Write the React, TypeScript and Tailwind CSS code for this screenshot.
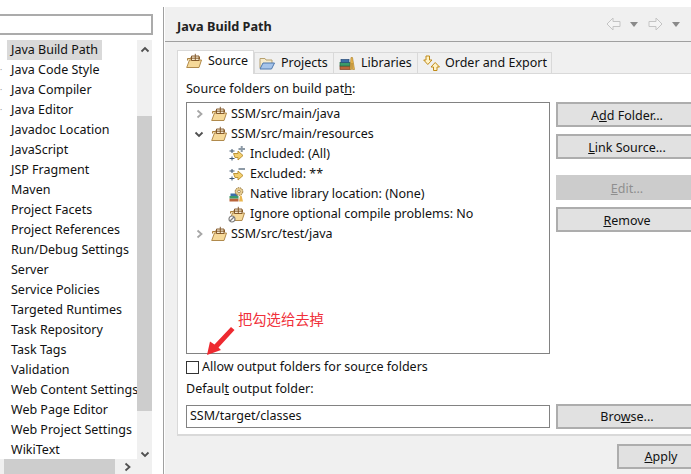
import React from "react";

const FONT = "font-['Noto_Sans','Open_Sans',sans-serif]";

const items = [
  "Java Build Path", "Java Code Style", "Java Compiler", "Java Editor", "Javadoc Location", "JavaScript",
  "JSP Fragment", "Maven", "Project Facets", "Project References", "Run/Debug Settings", "Server",
  "Service Policies", "Targeted Runtimes", "Task Repository", "Task Tags", "Validation",
  "Web Content Settings", "Web Page Editor", "Web Project Settings", "WikiText",
];

function Pkg({ className = "" }: { className?: string }) {
  return (
    <svg width="16" height="16" viewBox="0 0 16 16" className={className}>
      <path d="M1.500 7.500v-2h3l1-1.500h8v2" fill="#f3dca8" stroke="#a9803f" />
      <path d="M.7 14.500 3.500 7h12l-2.500 7.500z" fill="#f6d999" stroke="#b08a4c" />
      <path d="M5.500 3h7.500v4.500H5.500z" fill="#f7ecd2" stroke="#7a4f20" strokeWidth=".9" />
      <path d="M9.300 .8v7M4.500 5.200h9.500" stroke="#7a4f20" strokeWidth=".9" />
    </svg>
  );
}

function ProjectFolder() {
  return (
    <svg width="16" height="16" viewBox="0 0 16 16">
      <path d="M1 13V3.500h5l1 1.500h6v3" fill="#f6ebcd" stroke="#b7a16f" />
      <path d="M1 14h11.500L15.500 8H4z" fill="#a6c4ea" stroke="#4f78ad" />
    </svg>
  );
}

function Books() {
  return (
    <svg width="16" height="16" viewBox="0 0 16 16">
      <rect x="1" y="11" width="10" height="3.500" fill="#b9643a" stroke="#7d3f20" strokeWidth=".7" />
      <rect x="1" y="7.500" width="10" height="3.500" fill="#3c9a6a" stroke="#1f6b45" strokeWidth=".7" />
      <rect x="2" y="4.500" width="8" height="3" fill="#3b6ea8" stroke="#254a78" strokeWidth=".7" />
      <path d="M11 14.500 12 2.500h1.500l2 12h-2L13 8l-.5 6.500z" fill="#eab64f" stroke="#a87a20" strokeWidth=".6" />
    </svg>
  );
}

function OrderIcon() {
  return (
    <svg width="18" height="16" viewBox="0 0 18 16">
      <path d="M3 1h3.500v4H9L4.800 9.500 .7 5H3z" fill="#fff3c8" stroke="#c08a18" />
      <path d="M10.500 15.500V12H8l4.200-4.500L16.500 12H14v3.500z" fill="#fff3c8" stroke="#c08a18" />
    </svg>
  );
}

function Filter({ minus }: { minus?: boolean }) {
  return (
    <svg width="16" height="16" viewBox="0 0 16 16">
      <path d="M.5 5h5M.5 12.500h5M3 3v4M3 10.500v4" stroke="#3f566e" />
      <path d="M4.500 7.500H9V5L14 9.500 9 14v-2.500H6z" fill="#f3cf6e" stroke="#b58b2d" strokeWidth=".9" />
      <path d="M9.500 3h6.500" stroke="#8d9aa6" strokeWidth="2" />
      {!minus && <path d="M12.700 0v6" stroke="#8d9aa6" strokeWidth="2" />}
    </svg>
  );
}

function Native() {
  return (
    <svg width="16" height="16" viewBox="0 0 16 16">
      <rect x="0.500" y="12.500" width="9" height="3" fill="#b9643a" />
      <rect x="0.500" y="10" width="9" height="2.500" fill="#3c9a6a" />
      <rect x="1.500" y="7.500" width="7" height="2.500" fill="#3b6ea8" />
      <circle cx="10" cy="5.500" r="3.800" fill="#e9cf94" stroke="#8a6a30" strokeDasharray="1.500 .8" />
      <circle cx="10" cy="5.500" r="1.300" fill="#fff" stroke="#8a6a30" strokeWidth=".7" />
      <path d="M10 15.500l1-6h1.500l1.500 6z" fill="#eab64f" />
    </svg>
  );
}

function Ignore() {
  return (
    <div className="relative w-4 h-4">
      <Pkg />
      <svg width="8" height="8" viewBox="0 0 8 8" className="absolute left-[-1px] bottom-[-1px]">
        <circle cx="4" cy="4" r="3" fill="#fff" stroke="#7c7c7c" strokeWidth="1.200" />
        <path d="M2 6l4-4" stroke="#7c7c7c" strokeWidth="1.200" />
      </svg>
    </div>
  );
}

function Chevron({ dir, dark }: { dir: "right" | "down" | "up" | "left"; dark?: boolean }) {
  const d = { right: "M3.500 1.500 7.500 5l-4 3.500", left: "M6.500 1.500 2.500 5l4 3.500", down: "M1.500 3.500 5 7l3.500-3.500", up: "M1.500 6.500 5 3l3.500 3.500" }[dir];
  return (
    <svg width="10" height="10" viewBox="0 0 10 10">
      <path d={d} fill="none" stroke={dark ? "#505050" : "#a6a6a6"} strokeWidth="1.800" />
    </svg>
  );
}

function NavArrow({ flip }: { flip?: boolean }) {
  return (
    <svg width="15" height="14" viewBox="0 0 15 14" className={flip ? "-scale-x-100" : ""}>
      <path d="M7 1 1 7l6 6V9.500h7v-5H7z" fill="#f4f4f4" stroke="#c4c4c4" />
    </svg>
  );
}

function Caret() {
  return (
    <svg width="8" height="5" viewBox="0 0 8 5">
      <path d="M0 0h8L4 5z" fill="#8a8a8a" />
    </svg>
  );
}

function Tab({ icon, label, active, className }: { icon: React.ReactNode; label: string; active?: boolean; className: string }) {
  return (
    <div
      className={
        "flex items-center whitespace-nowrap border-l border-t border-[#d9d9d9] " +
        (active ? "h-[24px] bg-white border-r mb-[-1px] z-10 pb-[3px] " : "h-[21px] pb-[1px] bg-[#f0f0f0] ") +
        className
      }
    >
      {icon}
      <span>{label}</span>
    </div>
  );
}

function Btn({ children, disabled, low, className = "" }: { children: React.ReactNode; disabled?: boolean; low?: boolean; className?: string }) {
  return (
    <div
      className={
        "h-[25px] flex items-center justify-center border-2 " +
        (low ? "pt-[3px] " : "pt-[1px] ") +
        (disabled ? "bg-[#cccccc] border-[#cccccc] text-[#8f8f8f] " : "bg-[#e1e1e1] border-[#adadad] ") +
        className
      }
    >
      <span>{children}</span>
    </div>
  );
}

function Row({ icon, label, chevron, indent }: { icon: React.ReactNode; label: string; chevron?: React.ReactNode; indent?: boolean }) {
  return (
    <div className={"h-[20px] flex items-center " + (indent ? "pl-[42px]" : "pl-[7px]")}>
      {!indent && <div className="w-[17px] flex justify-start">{chevron}</div>}
      <div className={indent ? "w-[21px]" : "w-[20px]"}>{icon}</div>
      <span className="pb-[1px]">{label}</span>
    </div>
  );
}

export default function App() {
  return (
    <div className={"relative w-[691px] h-[474px] overflow-hidden bg-white flex text-[12.5px] leading-[20px] text-[#111] " + FONT}>
      {/* left preference tree */}
      <div className="w-[163px] shrink-0 flex flex-col">
        <div className="h-[21px] mt-[14px] mr-[10px] border-2 border-[#ababab] border-l-0 bg-white" />
        <div className="mt-[5px] w-[152px] flex">
          <div className="w-[137px] h-[419px] overflow-hidden relative">
            {items.map((t, i) => (
              <div key={t} className="h-[20px] flex items-center whitespace-nowrap">
                <span className="w-[7px] shrink-0 text-[8px] text-[#999]">{i > 0 && i < 4 ? "·" : ""}</span>
                <span className={"h-[20px] leading-[20px] pl-[4px] pr-[4px] " + (i === 0 ? "bg-[#d9d9d9]" : "")}>{t}</span>
              </div>
            ))}
          </div>
          <div className="w-[15px] h-[419px] bg-[#f0f0f0] flex flex-col items-center">
            <div className="h-[19px] flex items-center"><Chevron dir="up" dark /></div>
            <div className="mt-[57px] w-full h-[295px] bg-[#cdcdcd]" />
            <div className="mt-[37px] h-[11px] flex items-center"><Chevron dir="down" dark /></div>
          </div>
        </div>
        <div className="w-[152px] h-[15px] bg-[#f0f0f0] flex">
          <div className="ml-[4px] w-[111px] bg-[#cdcdcd]" />
          <div className="w-[22px] flex items-center justify-end pr-[5px]"><Chevron dir="right" dark /></div>
        </div>
      </div>

      <div className="w-px mt-[7px] bg-[#a0a0a0]" />
      <div className="w-px" />

      {/* right property page */}
      <div className="flex-1 min-w-0 mt-[7px] bg-[#f0f0f0] flex flex-col">
        <div className="h-[35px] shrink-0 border-b border-[#a0a0a0] flex items-center pl-[12px] pr-[11px] pt-[3px]">
          <span className="text-[12.7px] font-bold text-[#222]">Java Build Path</span>
          <div className="ml-auto flex items-center pb-[3px]">
            <NavArrow />
            <div className="ml-[9px]"><Caret /></div>
            <div className="ml-[10px]"><NavArrow flip /></div>
            <div className="ml-[9px]"><Caret /></div>
          </div>
        </div>

        <div className="ml-[12px] mt-[7px] w-[540px] shrink-0 flex flex-col">
          <div className="flex items-end h-[24px] relative">
            <Tab active className="w-[77px] pl-[8px]" icon={<div className="mr-[6px]"><Pkg /></div>} label="Source" />
            <Tab className="w-[79px] pl-[4px]" icon={<div className="mr-[6px]"><ProjectFolder /></div>} label="Projects" />
            <Tab className="w-[84px] pl-[5px]" icon={<div className="mr-[6px]"><Books /></div>} label="Libraries" />
            <Tab className="w-[135px] pl-[5px] border-r" icon={<div className="mr-[4px]"><OrderIcon /></div>} label="Order and Export" />
          </div>
          <div className="h-[363px] bg-white border-l border-t border-b-2 border-[#d9d9d9] pl-[8px] pt-[5px] flex flex-col">
            <div className="h-[20px] leading-[20px]">Source folders on build pat<u>h</u>:</div>
            <div className="flex mt-[3px]">
              <div className="w-[364px] shrink-0 h-[252px] border border-[#828282] pt-[1px] bg-white">
                <Row chevron={<Chevron dir="right" />} icon={<Pkg />} label="SSM/src/main/java" />
                <Row chevron={<Chevron dir="down" dark />} icon={<Pkg />} label="SSM/src/main/resources" />
                <Row indent icon={<Filter />} label="Included: (All)" />
                <Row indent icon={<Filter minus />} label="Excluded: **" />
                <Row indent icon={<Native />} label="Native library location: (None)" />
                <Row indent icon={<Ignore />} label="Ignore optional compile problems: No" />
                <Row chevron={<Chevron dir="right" />} icon={<Pkg />} label="SSM/src/test/java" />
              </div>
              <div className="ml-[6px] w-[142px] shrink-0">
                <Btn low>A<u>d</u>d Folder...</Btn>
                <Btn low className="mt-[7px]"><u>L</u>ink Source...</Btn>
                <Btn low disabled className="mt-[16px]"><u>E</u>dit...</Btn>
                <Btn low className="mt-[7px]"><u>R</u>emove</Btn>
              </div>
            </div>
            <div className="flex items-center mt-[3px] h-[20px]">
              <div className="w-[13px] h-[13px] border border-[#333] bg-white mt-[1px]" />
              <span className="ml-[3px]">Allow output folders for sou<u>r</u>ce folders</span>
            </div>
            <div className="mt-[2px] h-[20px]">Defaul<u>t</u> output folder:</div>
            <div className="flex mt-[5px] items-center">
              <div className="w-[364px] shrink-0 h-[23px] border border-[#828282] bg-white pl-[3px] pb-[1px] flex items-center">SSM/target/classes</div>
              <div className="ml-[6px] w-[142px] shrink-0"><Btn>Bro<u>w</u>se...</Btn></div>
            </div>
          </div>
        </div>

        <div className="w-[540px] shrink-0 flex mt-[8px] pl-[452px]">
          <Btn className="w-[88px] shrink-0"><u>A</u>pply</Btn>
        </div>
      </div>

      {/* annotation over the page */}
      <div className="absolute left-[238px] top-[309px] text-[14.300px] leading-[20px] text-[#f0303a] font-['Noto_Sans_CJK_SC',sans-serif] whitespace-nowrap">把勾选给去掉</div>
      <svg width="34" height="34" viewBox="0 0 34 34" className="absolute left-[204px] top-[325px]">
        <path d="M3 30 6 16.500l4.500 3L27 2l3.500 3L14.500 22.500l2.500 2.500z" fill="#ee2a30" />
      </svg>
    </div>
  );
}
